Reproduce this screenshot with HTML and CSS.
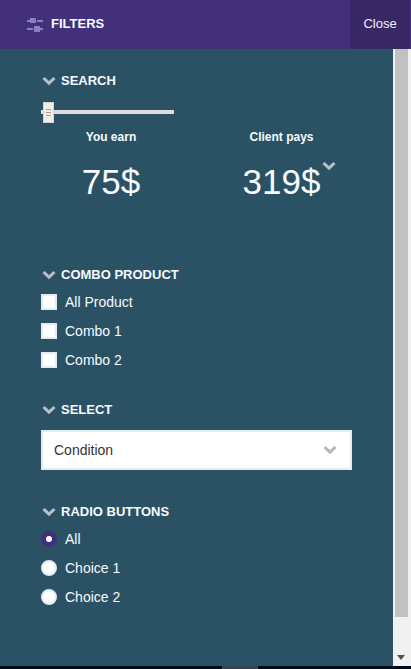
FILE: index.html
```html
<!DOCTYPE html>
<html lang="en">
<head>
<meta charset="utf-8">
<title>Filters</title>
<link rel="stylesheet" href="styles.css">
</head>
<body>
<svg class="defs" aria-hidden="true">
  <symbol id="chevron" viewBox="0 0 14 10"><path d="M1.5 2 7 7.2 12.5 2" fill="none" stroke="currentColor" stroke-width="3"/></symbol>
</svg>
<header class="bar">
  <svg class="bar-icon" viewBox="0 0 16 14" aria-hidden="true">
    <path d="M0 2h3V0h6v5H3V4H0zM10 2h6v2h-6zM0 10h6v2H0zM7 8h6v2h3v2h-3v2H7z"/>
  </svg>
  <h1 class="bar-title">FILTERS</h1>
  <button class="close" type="button">Close</button>
</header>
<div class="body">
  <form class="filters">
    <section class="group search">
      <h2 class="heading"><svg class="chevron"><use href="#chevron"/></svg><label for="amount">SEARCH</label></h2>
      <input class="slider" id="amount" type="range" min="0" max="100" value="2">
      <div class="prices">
        <div class="price"><h3 class="price-label">You earn</h3><p class="price-value">75$</p></div>
        <div class="price"><h3 class="price-label">Client pays</h3><p class="price-value">319$<svg class="chevron price-chevron"><use href="#chevron"/></svg></p></div>
      </div>
    </section>
    <section class="group combos">
      <h2 class="heading"><svg class="chevron"><use href="#chevron"/></svg>COMBO PRODUCT</h2>
      <div class="options">
        <label class="option"><input class="box" type="checkbox">All Product</label>
        <label class="option"><input class="box" type="checkbox">Combo 1</label>
        <label class="option"><input class="box" type="checkbox">Combo 2</label>
      </div>
    </section>
    <section class="group">
      <h2 class="heading"><svg class="chevron"><use href="#chevron"/></svg><label for="condition">SELECT</label></h2>
      <div class="select-wrap">
        <select class="select" id="condition"><option>Condition</option></select>
        <svg class="chevron select-chevron"><use href="#chevron"/></svg>
      </div>
    </section>
    <section class="group">
      <h2 class="heading"><svg class="chevron"><use href="#chevron"/></svg>RADIO BUTTONS</h2>
      <div class="options">
        <label class="option"><input class="radio" type="radio" name="choice" checked>All</label>
        <label class="option"><input class="radio" type="radio" name="choice">Choice 1</label>
        <label class="option"><input class="radio" type="radio" name="choice">Choice 2</label>
      </div>
    </section>
  </form>
  <div class="scrollbar" aria-hidden="true">
    <div class="thumb"></div>
    <svg class="down" viewBox="0 0 8 5"><path d="M0 0h8L4 5z"/></svg>
  </div>
</div>
<footer class="strip"><div class="strip-mark"></div></footer>
</body>
</html>
```
FILE: styles.css
```css
* { box-sizing: border-box; }
body {
  margin: 0;
  min-height: 100vh;
  display: flex;
  flex-direction: column;
  background: #2b5165;
  color: #f6fbff;
  font: 14px/20px "Liberation Sans", Arial, sans-serif;
}
h1, h2, h3, p { margin: 0; }
.defs { position: absolute; width: 0; height: 0; }

.bar {
  display: flex;
  align-items: center;
  height: 49px;
  padding: 0 1px 0 27px;
  background: #43307b;
}
.bar-icon { width: 16px; height: 14px; fill: #8d7fc0; }
.bar-title { flex: 1; margin-left: 8px; padding-bottom: 2px; font-size: 13px; line-height: 20px; }
.close {
  align-self: stretch;
  width: 60px;
  padding: 0 0 2px;
  border: 0;
  background: #382966;
  color: #f3eeff;
  font: 13px/20px "Liberation Sans", Arial, sans-serif;
}

.body { flex: 1; display: flex; }
.filters { flex: 1; padding: 22px 41px 0; }
.group { margin-bottom: 32px; }
.search { margin-bottom: 63px; }
.combos { margin-bottom: 26px; }
.heading {
  display: flex;
  align-items: center;
  gap: 5px;
  padding-left: 1px;
  font-size: 13px;
  line-height: 20px;
}
.chevron { width: 14px; height: 10px; color: #b9c0c6; }

.slider {
  appearance: none;
  display: block;
  width: 133px;
  height: 22px;
  margin: 10px 0 4px;
  background: linear-gradient(#dfe0dd, #dfe0dd) center / 100% 4px no-repeat;
}
.slider::-webkit-slider-thumb {
  appearance: none;
  width: 11px;
  height: 21px;
  border: 1px solid #d8d4cd;
  background:
    linear-gradient(#b79a8c, #b79a8c) center 6px / 5px 1px no-repeat,
    linear-gradient(#b79a8c, #b79a8c) center 9px / 5px 1px no-repeat,
    linear-gradient(#b79a8c, #b79a8c) center 12px / 5px 1px no-repeat,
    #f1efea;
}

.prices { display: grid; grid-template-columns: 140px 1fr; gap: 30px; }
.price { text-align: center; }
.price-label { font-size: 12px; line-height: 20px; }
.price-value { position: relative; padding-top: 15px; font-size: 35px; line-height: 40px; }
.price-chevron { position: absolute; top: 14px; margin-left: 2px; }

.options { padding-top: 2px; }
.option { display: flex; align-items: center; gap: 8px; height: 29px; }
.box, .radio {
  appearance: none;
  width: 16px;
  height: 16px;
  margin: 0;
  border: 2px solid #e3ebf5;
  background: #fff;
}
.radio { border-radius: 50%; }
.box:checked { background: #43307b; }
.radio:checked { border: 5px solid #43307b; }

.select-wrap { position: relative; margin-top: 10px; }
.select {
  appearance: none;
  display: block;
  width: 100%;
  height: 40px;
  padding: 0 11px;
  border: 2px solid #e3ebf5;
  border-radius: 0;
  background: #fff;
  color: #333;
  font: 14px/20px "Liberation Sans", Arial, sans-serif;
}
.select-chevron { position: absolute; right: 15px; top: 15px; color: #b5b5b5; pointer-events: none; }

.scrollbar {
  display: flex;
  flex-direction: column;
  justify-content: space-between;
  width: 18px;
  padding: 0 3px 6px 2px;
  background: #f1f1f1;
}
.thumb { height: 93%; background: #c1c1c1; }
.down { width: 8px; height: 5px; margin-left: 2px; fill: #505050; }
.strip { height: 3px; background: #020c18; }
.strip-mark { width: 36px; height: 3px; margin-left: 54%; background: #39434f; }
```
